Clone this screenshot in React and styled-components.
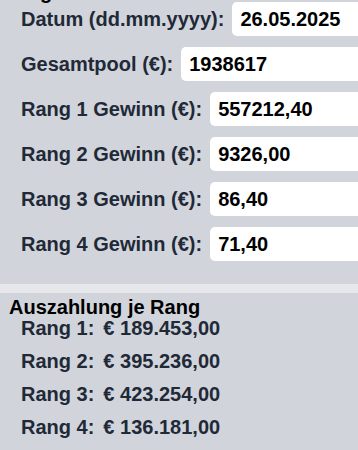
import React from "react";
import styled, { createGlobalStyle } from "styled-components";

const GlobalStyle = createGlobalStyle`
  html, body {
    margin: 0;
    padding: 0;
    background: #e5e7eb;
    font-family: "Liberation Sans", Arial, sans-serif;
    overflow: hidden;
  }
`;

const Page = styled.div`
  margin-top: -18px;
  display: flex;
  flex-direction: column;
  gap: 9px;
  width: 358px;
`;

const Panel = styled.section`
  background: #d1d5db;
  padding: ${(p) => p.$pad};
`;

const Heading = styled.h2`
  margin: 0;
  padding-left: 9px;
  font-size: 20px;
  line-height: 20px;
  font-weight: bold;
  color: #000;
`;

const Form = styled.div`
  display: flex;
  flex-direction: column;
  gap: 11px;
  padding-left: 21px;
`;

const Row = styled.div`
  display: flex;
  align-items: center;
  gap: 8px;
  height: 34px;
  white-space: nowrap;
`;

const Label = styled.label`
  font-size: 20px;
  line-height: 23px;
  font-weight: bold;
  color: #1f2937;
`;

const Input = styled.input`
  box-sizing: border-box;
  height: 34px;
  width: 200px;
  flex: none;
  border: none;
  border-radius: 5px;
  background: #fff;
  padding: 0 8px;
  font-family: "Liberation Sans", Arial, sans-serif;
  font-size: 20px;
  font-weight: bold;
  color: #000;
  outline: none;
`;

const List = styled.ul`
  list-style: none;
  margin: 0;
  padding: 0 0 0 21px;
  display: flex;
  flex-direction: column;
  gap: 10px;
`;

const Item = styled.li`
  display: flex;
  gap: 9px;
  font-size: 20px;
  line-height: 23px;
  font-weight: bold;
  color: #1f2937;
`;

const fields = [
  ["Datum (dd.mm.yyyy):", "26.05.2025"],
  ["Gesamtpool (€):", "1938617"],
  ["Rang 1 Gewinn (€):", "557212,40"],
  ["Rang 2 Gewinn (€):", "9326,00"],
  ["Rang 3 Gewinn (€):", "86,40"],
  ["Rang 4 Gewinn (€):", "71,40"],
];

const payouts = [
  ["Rang 1:", "€ 189.453,00"],
  ["Rang 2:", "€ 395.236,00"],
  ["Rang 3:", "€ 423.254,00"],
  ["Rang 4:", "€ 136.181,00"],
];

export default function App() {
  return (
    <>
      <GlobalStyle />
      <Page>
        <Panel $pad="0 0 23px">
          <Heading>Eingaben</Heading>
          <Form>
            {fields.map(([l, v]) => (
              <Row key={l}>
                <Label>{l}</Label>
                <Input defaultValue={v} />
              </Row>
            ))}
          </Form>
        </Panel>
        <Panel $pad="4px 0 20px">
          <Heading>Auszahlung je Rang</Heading>
          <List>
            {payouts.map(([l, v]) => (
              <Item key={l}>
                <span>{l}</span>
                <span>{v}</span>
              </Item>
            ))}
          </List>
        </Panel>
      </Page>
    </>
  );
}
